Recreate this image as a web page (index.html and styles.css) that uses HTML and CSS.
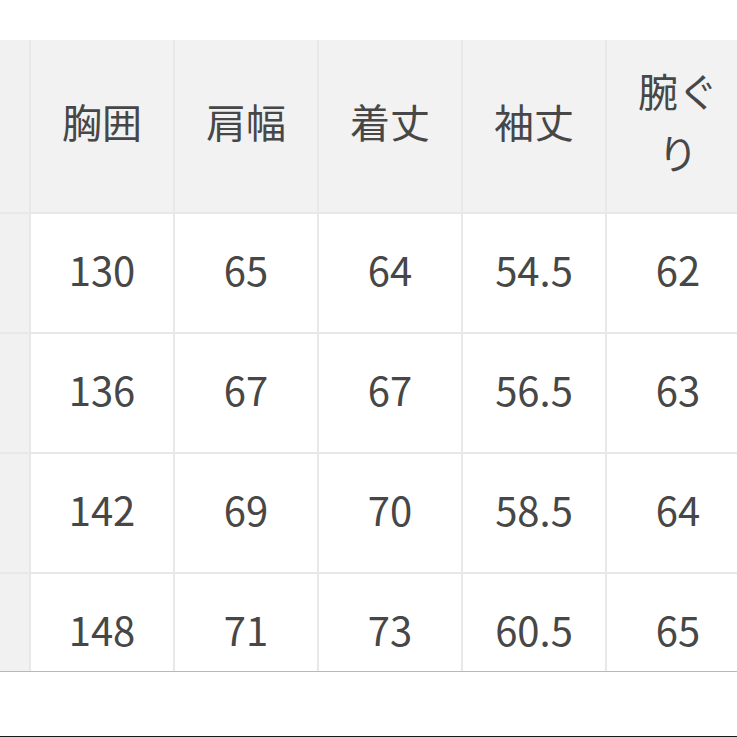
FILE: index.html
```html
<!DOCTYPE html>
<html lang="ja">
<head>
<meta charset="utf-8">
<title>サイズ表</title>
<link rel="stylesheet" href="styles.css">
</head>
<body>
<div class="page">
  <div class="frame">
    <div class="grid">
      <div class="cell head side"></div>
      <div class="cell head">胸囲</div>
      <div class="cell head">肩幅</div>
      <div class="cell head">着丈</div>
      <div class="cell head">袖丈</div>
      <div class="cell head">腕ぐり</div>

      <div class="cell side"></div>
      <div class="cell">130</div>
      <div class="cell">65</div>
      <div class="cell">64</div>
      <div class="cell">54.5</div>
      <div class="cell">62</div>

      <div class="cell side"></div>
      <div class="cell">136</div>
      <div class="cell">67</div>
      <div class="cell">67</div>
      <div class="cell">56.5</div>
      <div class="cell">63</div>

      <div class="cell side"></div>
      <div class="cell">142</div>
      <div class="cell">69</div>
      <div class="cell">70</div>
      <div class="cell">58.5</div>
      <div class="cell">64</div>

      <div class="cell side"></div>
      <div class="cell">148</div>
      <div class="cell">71</div>
      <div class="cell">73</div>
      <div class="cell">60.5</div>
      <div class="cell">65</div>
    </div>
  </div>
  <div class="edge"></div>
</div>
</body>
</html>
```

FILE: styles.css
```css
html, body {
  margin: 0;
  padding: 0;
  background: #ffffff;
}

.page {
  width: 737px;
  height: 737px;
  overflow: hidden;
  display: flex;
  flex-direction: column;
  font-family: "Noto Sans CJK JP", "Noto Sans", sans-serif;
  color: #474747;
}

.frame {
  margin-top: 40px;
  height: 631px;
  overflow: hidden;
  border-bottom: 1px solid #b8b8b8;
  flex: none;
}

.grid {
  display: grid;
  grid-template-columns: 29px repeat(5, 142px);
  grid-template-rows: 172px repeat(4, 118px);
  gap: 2px;
  background: #e8e8e8;
  width: 760px;
}

.cell {
  background: #ffffff;
  display: flex;
  align-items: center;
  justify-content: center;
  text-align: center;
  padding: 0 15px 8px;
  font-size: 40px;
  line-height: 62px;
}

.head {
  background: #f2f2f2;
  padding-bottom: 10px;
}

.side {
  background: #f1f1f1;
  padding: 0;
}

.edge {
  margin-top: auto;
  height: 1px;
  background: #1a1a1a;
  flex: none;
}
```
